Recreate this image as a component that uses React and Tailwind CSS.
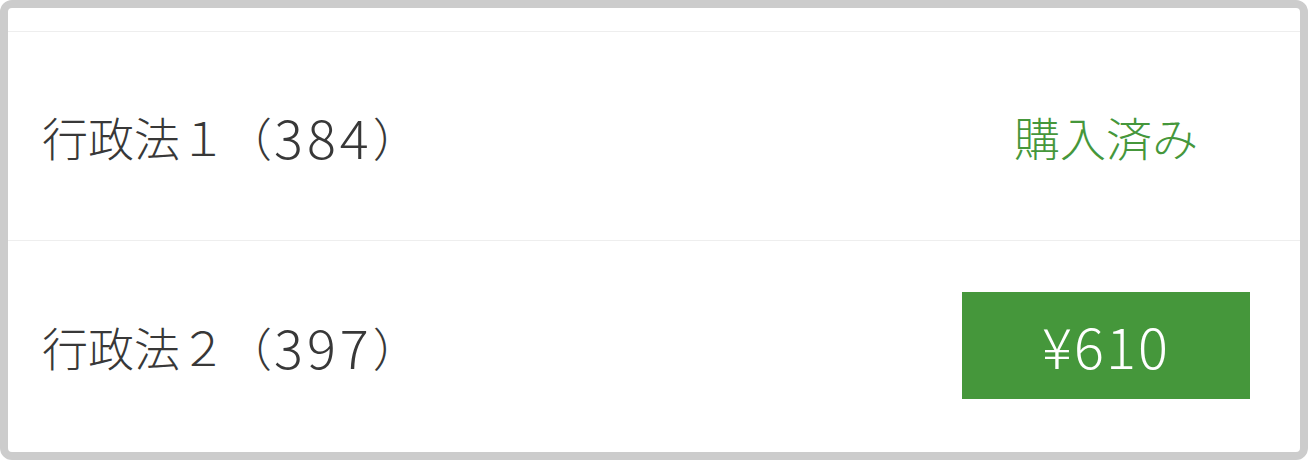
const items = [
  { name: '行政法１', count: '384', purchased: true },
  { name: '行政法２', count: '397', purchased: false, price: '610' },
];

const Fila = ({ name, count, purchased, price, last }) => (
  <div className={`flex items-center justify-between pl-[34px] pr-[50px] h-[209px] ${last ? '' : 'border-b border-[#eeeeee]'}`}>
    <p className="text-[46px] leading-none text-[#383838] font-light flex items-center">
      {name}（<span className="text-[54px] tracking-[4px] pl-[2px]">{count}</span>）
    </p>
    {purchased ? (
      <span className="w-[288px] text-center text-[46px] leading-none font-light text-[#45973b]">購入済み</span>
    ) : (
      <button className="w-[288px] h-[107px] bg-[#45973b] text-white text-[56px] tracking-[2px] leading-none font-light flex items-center justify-center pb-[2px]">
        ¥{price}
      </button>
    )}
  </div>
);

export default function App() {
  return (
    <div
      className="w-[1308px] h-[460px] bg-white border-[8px] border-[#cccccc] rounded-[12px] overflow-hidden"
      style={{ fontFamily: '"Noto Sans CJK JP", "Noto Sans", sans-serif' }}
    >
      <div className="h-[24px] border-b border-[#eeeeee]"></div>
      {items.map((item, i) => (
        <Fila key={i} {...item} last={i === items.length - 1} />
      ))}
    </div>
  );
}
